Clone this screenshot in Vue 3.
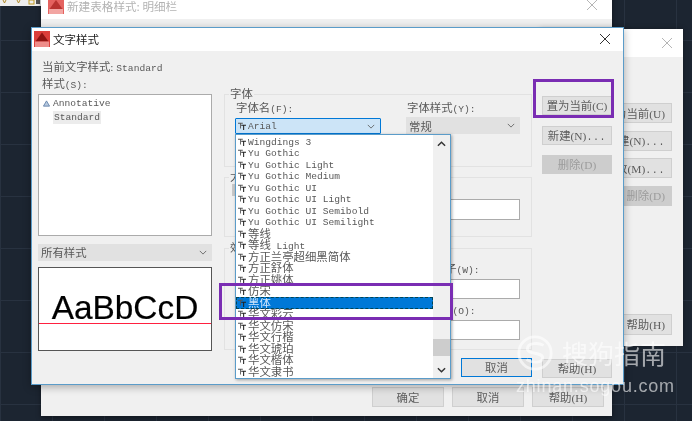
<script setup>
const names = ['Wingdings 3','Yu Gothic','Yu Gothic Light','Yu Gothic Medium','Yu Gothic UI','Yu Gothic UI Light','Yu Gothic UI Semibold','Yu Gothic UI Semilight','等线','等线 Light','方正兰亭超细黑简体','方正舒体','方正姚体','仿宋','黑体','华文彩云','华文仿宋','华文行楷','华文琥珀','华文楷体','华文隶书']
const isLatin = (s) => /^[\x00-\x7f]+$/.test(s)
const fonts = names.map((name) => ({
  name,
  parts: name.match(/[\x00-\x7f]+|[^\x00-\x7f]+/g).map((text) => ({ text, latin: isLatin(text) })),
}))
const backRight = [
  { t: '置为当前(U)', cls: '' },
  { t: '新建(N)', dots: true, cls: '' },
  { t: '修改(M)', dots: true, cls: '' },
  { t: '删除(D)', cls: 'off' },
]
</script>

<template>
  <div class="desk">
    <div class="toolbar">
      <svg width="41" height="6" viewBox="0 0 41 6"><path d="M3 0l1.5 3L6 0M17 0l1.5 3L20 0" fill="none" stroke="#b08a2a"/><rect x="29" y="0" width="5" height="4" fill="none" stroke="#c09a20"/><rect x="36" y="0" width="4" height="4" fill="#555"/></svg>
    </div>

    <section class="win back-one">
      <header class="back-title">
        <svg class="logo" viewBox="0 0 16 16"><rect width="16" height="16" fill="#e4625f"/><path d="M8 2L14.5 11H1.5Z" fill="#b83330"/><path d="M1 11h14v5H1z" fill="#f2a5a2"/></svg>
        <span class="faded">新建表格样式: 明细栏</span>
        <svg class="close faint" viewBox="0 0 12 12"><path d="M1 1l10 10M11 1L1 11" /></svg>
      </header>
      <div class="back-body">
        <div class="btn b71">确定</div>
        <div class="btn b71">取消</div>
        <div class="btn b71">帮助(H)</div>
      </div>
    </section>

    <section class="win back-two">
      <header class="two-title">
        <svg class="close faint" viewBox="0 0 12 12"><path d="M1 1l10 10M11 1L1 11" /></svg>
      </header>
      <div class="two-body">
        <div v-for="b in backRight" :key="b.t" class="btn two-btn" :class="b.cls"><span>{{ b.t }}<span v-if="b.dots" class="dots">...</span></span></div>
        <div class="btn two-btn two-help">帮助(H)</div>
      </div>
    </section>

    <section class="win dialog">
      <header class="title">
        <svg class="logo" viewBox="0 0 16 16"><rect width="16" height="16" fill="#dc3f3b"/><path d="M8 1.5L14.5 10.5H1.5Z" fill="#8f1412"/><path d="M1 10.5h14V16H1z" fill="#ee8d8a"/></svg>
        <span class="title-text">文字样式</span>
        <svg class="close" viewBox="0 0 12 12"><path d="M1 1l10 10M11 1L1 11" /></svg>
      </header>

      <div class="body">
        <div class="col-left">
          <div class="lbl">当前文字样式: <span class="m">Standard</span></div>
          <div class="lbl">样式<span class="m">(S):</span></div>
          <div class="list">
            <div class="list-row"><svg class="tri" viewBox="0 0 8 8"><path d="M4 1L7.5 7H.5Z" fill="#b7c9de" stroke="#5f7fa8"/></svg><span class="m">Annotative</span></div>
            <div class="list-row"><span class="m sel">Standard</span></div>
          </div>
          <div class="combo filter">所有样式<svg class="chev" viewBox="0 0 10 6"><path d="M1 1l4 4 4-4"/></svg></div>
          <div class="preview"><span class="sample">AaBbCcD</span><div class="base"></div></div>
        </div>

        <div class="col-mid">
          <fieldset class="group g-font">
            <div class="legend">字体</div>
            <div class="font-row">
              <div class="field-a">
                <div class="lbl2">字体名<span class="m">(F):</span></div>
                <div class="combo active">
                  <svg class="tt" viewBox="0 0 10 10"><path d="M0 1h6v1.2H3.6V8H2.500V2.200H0Z" fill="#555"/><path d="M4 3.500h6v1.300H7.700v5.200H6.400V4.800H4Z" fill="#222"/></svg>
                  <span class="m">Arial</span><svg class="chev" viewBox="0 0 10 6"><path d="M1 1l4 4 4-4"/></svg>
                </div>
              </div>
              <div class="field-b">
                <div class="lbl2">字体样式<span class="m">(Y):</span></div>
                <div class="combo style">常规<svg class="chev" viewBox="0 0 10 6"><path d="M1 1l4 4 4-4"/></svg></div>
              </div>
            </div>
          </fieldset>
          <fieldset class="group g-size">
            <div class="legend">大小</div>
            <div class="size-row"><i class="sliver"></i><div class="input size-input"></div></div>
          </fieldset>
          <fieldset class="group g-fx">
            <div class="legend">效果</div>
            <div class="lbl3 w-lbl">宽度因子<span class="m">(W):</span></div>
            <div class="input fx-input"></div>
            <div class="lbl3 o-lbl">倾斜角度<span class="m">(O):</span></div>
            <div class="input fx-input"></div>
          </fieldset>
          <div class="foot"><div class="btn cancel">取消</div></div>
        </div>

        <div class="col-right">
          <div class="btn act">置为当前(C)</div>
          <div class="btn act"><span>新建(N)<span class="dots">...</span></span></div>
          <div class="btn act off">删除(D)</div>
          <div class="btn act help">帮助(H)</div>
        </div>
      </div>

      <div class="dropdown">
        <div class="rows">
          <div v-for="f in fonts" :key="f.name" class="row" :class="{ on: f.name === '黑体' }">
            <svg class="tt" viewBox="0 0 10 10"><path d="M0 1h6v1.2H3.6V8H2.500V2.200H0Z" fill="#555"/><path d="M4 3.500h6v1.300H7.700v5.200H6.400V4.800H4Z" fill="#222"/></svg>
            <span class="nm"><span v-for="(p, i) in f.parts" :key="i" :class="p.latin ? 'nm-l' : 'nm-c'">{{ p.text }}</span></span>
          </div>
        </div>
        <div class="scroll">
          <svg class="sc-arrow" viewBox="0 0 10 6"><path d="M1 5l4-4 4 4"/></svg>
          <div class="thumb"></div>
          <svg class="sc-arrow" viewBox="0 0 10 6"><path d="M1 1l4 4 4-4"/></svg>
        </div>
      </div>
    </section>

    <div class="mark mark-btn"></div>
    <div class="mark mark-row"></div>

    <div class="water">
      <div class="water-top">
        <svg class="water-s" viewBox="0 0 40 40"><circle cx="20" cy="20" r="17"/><path d="M29 12c-5-3-17-3-17 3.500s16 3 16 9.500-12 5-17 2"/></svg>
        <span>搜狗指南</span>
      </div>
      <div class="water-url">zhinan.sogou.com</div>
    </div>
  </div>
</template>

<style scoped>
.desk {
  position: relative;
  width: 692px;
  height: 421px;
  overflow: hidden;
  background-color: #1c2531;
  background-image:
    linear-gradient(#283240 1px, transparent 1px),
    linear-gradient(90deg, #283240 1px, transparent 1px);
  background-size: 52px 52px;
  background-position: 0 40px;
  font-family: "Liberation Serif", "Noto Sans CJK SC", serif;
  font-size: 11.4px;
  color: #585858;
  filter: blur(0.35px);
}
.toolbar { position: absolute; left: 0; top: 0; width: 41px; height: 6px; background: #eee; display: flex; }
.win { position: absolute; display: flex; flex-direction: column; }
.m { font-family: "Liberation Mono", monospace; font-size: 9.6px; }
.dots { font-family: "Liberation Mono", monospace; font-size: 10px; letter-spacing: .6px; }
.logo { width: 16px; height: 16px; flex: none; }
.close { width: 12px; height: 12px; flex: none; margin-left: auto; fill: none; stroke: #333; stroke-width: 1; }
.close.faint { stroke: #b5b5b5; }

.back-one { left: 41px; top: -11px; width: 571px; height: 427px; background: #f0f0f0; box-shadow: 0 2px 5px rgba(0,0,0,.4); }
.back-title { height: 30px; flex: none; background: #fff; display: flex; align-items: center; padding: 0 14px 0 7px; gap: 3px; box-sizing: border-box; }
.back-title .logo { margin-top: 4px; }
.faded { color: #b3b3b3; font-family: "Noto Sans CJK SC", sans-serif; font-size: 11.6px; margin-top: 4px; }
.back-title .close { margin-top: 2px; }
.back-body { flex: 1; display: flex; justify-content: flex-end; align-items: flex-end; gap: 8px; padding: 0 8px 9px 0; }
.btn { background: #e1e1e1; border: 1px solid #cfcfcf; box-sizing: border-box; display: flex; align-items: center; justify-content: center; font-size: 11.4px; color: #5c5c5c; white-space: nowrap; padding-bottom: 1px; }
.b71 { width: 72px; height: 20px; }

.back-two { left: 540px; top: 29px; width: 143px; height: 317px; background: #f0f0f0; box-shadow: 0 0 5px rgba(0,0,0,.3); }
.two-title { height: 28px; flex: none; background: #fff; display: flex; align-items: center; padding: 0 10px; box-sizing: border-box; }
.two-body { flex: 1; display: flex; flex-direction: column; align-items: flex-end; padding: 46px 11px 11px 0; gap: 7.5px; }
.two-btn { width: 71px; height: 20px; justify-content: flex-end; padding-right: 6px; }
.two-help { margin-top: auto; height: 21px; width: 70px; }
.off { background: #cdcdcd; color: #9c9c9c; border-color: #cdcdcd; }

.dialog { left: 31px; top: 27px; width: 593px; height: 358px; background: #f0f0f0; border: 1px solid #5b9cc9; box-sizing: border-box; box-shadow: 0 2px 8px rgba(0,0,0,.3); }
.title { height: 23px; flex: none; background: #fff; display: flex; align-items: center; padding: 0 12px 1px 2px; gap: 3px; box-sizing: border-box; }
.title-text { color: #222; font-family: "Noto Sans CJK SC", sans-serif; font-size: 11.5px; }
.body { flex: 1; display: flex; padding: 9px 0 6px 6px; min-height: 0; }

.col-left { width: 174px; flex: none; display: flex; flex-direction: column; }
.lbl { height: 17px; line-height: 15px; padding-left: 4px; white-space: nowrap; }
.list { height: 142px; background: #fff; border: 1px solid #ababab; box-sizing: border-box; padding-top: 1px; }
.list-row { height: 14px; display: flex; align-items: center; padding-left: 4px; gap: 3px; }
.list-row:last-child { padding-left: 14px; }
.tri { width: 7px; height: 7px; }
.sel { background: #ececec; padding: 0 1px; line-height: 13px; }
.combo { display: flex; align-items: center; box-sizing: border-box; background: #e1e1e1; position: relative; }
.chev { width: 8px; height: 5px; fill: none; stroke: #555; position: absolute; }
.filter { height: 17px; margin-top: 8px; padding: 0 0 1px 3px; }
.filter .chev { right: 5px; }
.preview { height: 84px; margin-top: 6px; background: #fff; border: 1px solid #555; box-sizing: border-box; position: relative; display: flex; justify-content: center; }
.sample { font-family: "Liberation Sans", Arial, sans-serif; font-size: 33.4px; color: #000; -webkit-text-stroke: .2px #000; line-height: 36px; margin-top: 22px; }
.base { position: absolute; left: 0; right: 0; top: 55px; height: 1px; background: #ff2040; }

.col-mid { width: 308px; margin-left: 12px; flex: none; margin-top: 34px; display: flex; flex-direction: column; }
.group { margin: 0; padding: 0; border: 1px solid #e2e2e2; box-sizing: border-box; min-width: 0; position: relative; }
.legend { position: absolute; left: 4px; top: -7px; background: #f0f0f0; padding: 0 1px; line-height: 13px; }
.g-font { height: 73px; }
.font-row { display: flex; padding: 6px 0 0 10px; }
.field-a { width: 146px; margin-right: 25px; flex: none; }
.field-b { width: 114px; flex: none; }
.lbl2 { height: 17px; line-height: 14px; padding-left: 1px; }
.active { height: 16px; background: #cce4f7; border: 1px solid #0078d7; border-radius: 1px; padding-left: 2px; gap: 2px; }
.active .chev { right: 5px; }
.style { height: 17px; margin-top: -1px; padding-left: 3px; }
.style .chev { right: 5px; }
.g-size { height: 60px; margin-top: 10px; padding: 21px 11px 0 0; }
.size-row { display: flex; align-items: flex-start; }
.sliver { width: 3px; height: 14px; margin: -17px 0 0 7px; background: #c8c8c8; }
.input { background: #fff; border: 1px solid #ababab; box-sizing: border-box; margin-left: auto; }
.size-input { width: 120px; height: 21px; }
.g-fx { height: 102px; margin-top: 11px; padding: 14px 11px 0 0; }
.lbl3 { height: 16px; line-height: 13px; white-space: nowrap; }
.w-lbl { padding-left: 186px; }
.o-lbl { padding-left: 182px; margin-top: 5px; }
.fx-input { width: 120px; height: 20px; }
.foot { display: flex; justify-content: flex-end; margin-top: 8px; }
.cancel { width: 71px; height: 19px; border: 1px solid #0078d7; }

.col-right { width: 70px; margin-left: 10px; flex: none; padding-top: 36px; display: flex; flex-direction: column; }
.act { height: 19px; margin-bottom: 10.5px; }
.help { margin-top: auto; margin-bottom: 0; }

.dropdown { position: absolute; left: 203px; top: 106px; width: 216px; height: 245px; background: #fff; border: 1px solid #5b9cc9; box-sizing: border-box; display: flex; box-shadow: 1px 1px 3px rgba(0,0,0,.35); }
.rows { flex: 1; min-width: 0; padding-top: 1px; }
.row { height: 11.5px; display: flex; align-items: center; padding-left: 2px; white-space: nowrap; }
.tt { width: 8px; height: 8px; flex: none; }
.nm { line-height: 11.5px; padding-left: 2px; }
.nm-l { font-family: "Liberation Mono", monospace; font-size: 9.6px; white-space: pre; }
.nm-c { font-family: "Noto Sans CJK SC", sans-serif; font-size: 11.4px; }
.on { background: #0078d7; color: #cfe6fb; outline: 1px dashed #045; outline-offset: -1px; }
.scroll { width: 17px; flex: none; background: #f0f0f0; display: flex; flex-direction: column; align-items: center; padding: 6px 0 5px; box-sizing: border-box; }
.sc-arrow { width: 9px; height: 6px; fill: none; stroke: #333; stroke-width: 1.6; flex: none; }
.thumb { width: 17px; height: 17px; background: #cdcdcd; margin-top: auto; margin-bottom: 11px; }

.mark { position: absolute; border: 3px solid #7a2db3; box-sizing: border-box; }
.mark-btn { left: 533px; top: 79px; width: 81px; height: 39px; }
.mark-row { left: 219px; top: 283px; width: 234px; height: 37px; }

.water { position: absolute; left: 516px; top: 333px; color: rgba(255,255,255,.6); font-family: "Noto Sans CJK SC", sans-serif; }
.water-top { display: flex; align-items: center; gap: 8px; font-size: 26px; line-height: 40px; white-space: nowrap; }
.water-s { width: 38px; height: 38px; fill: none; stroke: rgba(255,255,255,.6); stroke-width: 3; }
.water-url { font-family: "Liberation Sans", sans-serif; font-size: 18px; line-height: 20px; margin-top: 3px; letter-spacing: .8px; white-space: nowrap; }
</style>
